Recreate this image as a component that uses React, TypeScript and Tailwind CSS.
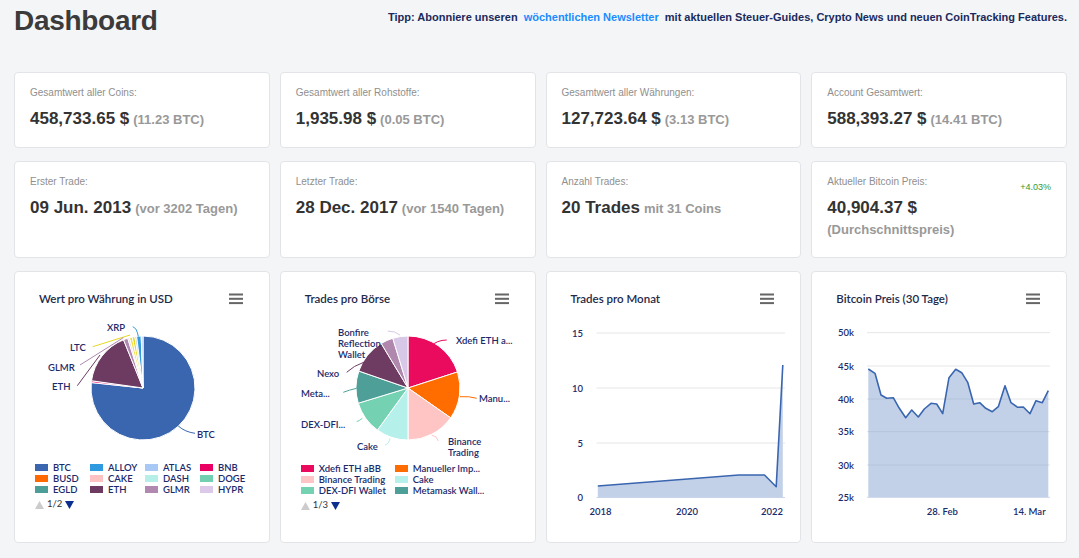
import React from "react";

const NAVY = "#1b2a6b";

type Slice = { from: number; to: number; color: string };

const pt = (cx: number, cy: number, r: number, a: number) => {
  const rad = (a * Math.PI) / 180;
  return [cx + r * Math.sin(rad), cy - r * Math.cos(rad)];
};

const arc = (cx: number, cy: number, r: number, a0: number, a1: number) => {
  const [x0, y0] = pt(cx, cy, r, a0);
  const [x1, y1] = pt(cx, cy, r, a1);
  const large = a1 - a0 > 180 ? 1 : 0;
  return `M${cx} ${cy} L${x0} ${y0} A${r} ${r} 0 ${large} 1 ${x1} ${y1} Z`;
};

const Pie = ({ cx, cy, r, slices }: { cx: number; cy: number; r: number; slices: Slice[] }) => (
  <g>
    {slices.map((s, i) => (
      <path key={i} d={arc(cx, cy, r, s.from, s.to)} fill={s.color} stroke="#fff" strokeWidth={1} strokeLinejoin="round" />
    ))}
  </g>
);

const Hamburger = () => (
  <svg width="14" height="12" viewBox="0 0 14 12">
    <rect x="0" y="0.5" width="14" height="2" fill="#666" />
    <rect x="0" y="4.8" width="14" height="2" fill="#666" />
    <rect x="0" y="9.1" width="14" height="2" fill="#666" />
  </svg>
);

const StatCard = ({ label, children, right }: { label: string; children: React.ReactNode; right?: React.ReactNode }) => (
  <div className="relative rounded-[4px] border border-[#e2e4e8] bg-white px-[15px] pt-[14px]">
    <div className="text-[10px] leading-[12px] text-[#8f8f8f]">{label}</div>
    <div className="mt-[10px]">{children}</div>
    {right}
  </div>
);

const Value = ({ main, sub }: { main: string; sub?: string }) => (
  <div className="leading-[20px] whitespace-nowrap">
    <span className="text-[17px] font-bold text-[#333]">{main}</span>
    {sub && <span className="ml-[4px] text-[13px] font-bold text-[#999]">{sub}</span>}
  </div>
);

const ChartCard = ({ title, children }: { title: string; children: React.ReactNode }) => (
  <div className="flex flex-col rounded-[4px] border border-[#e2e4e8] bg-white overflow-hidden" style={{ fontFamily: "Lato, 'Liberation Sans', sans-serif" }}>
    <div className="flex items-center justify-between pl-[24px] pr-[26px] pt-[20px] h-[34px]">
      <span className="text-[11.5px] leading-[14px] font-semibold text-[#1e2a4a]">{title}</span>
      <Hamburger />
    </div>
    {children}
  </div>
);

const Legend = ({ items, cols, colW, pl, page }: { items: [string, string][]; cols: number; colW: number; pl: number; page: string }) => (
  <div style={{ paddingLeft: pl }} className="pt-[5px]">
    <div className="grid" style={{ gridTemplateColumns: `repeat(${cols}, ${colW}px)` }}>
      {items.map(([c, n]) => (
        <div key={n} className="flex items-center h-[11px] whitespace-nowrap">
          <span className="w-[13px] h-[7px] shrink-0" style={{ background: c }} />
          <span className="ml-[5px] text-[9.5px] leading-[11px] font-semibold" style={{ color: NAVY }}>{n}</span>
        </div>
      ))}
    </div>
    <div className="flex items-center mt-[4px] h-[11px]">
      <svg width="9" height="8" viewBox="0 0 9 8"><path d="M4.5 0 L9 8 L0 8 Z" fill="#cccccc" /></svg>
      <span className="mx-[3px] text-[9.5px] text-[#333]">{page}</span>
      <svg width="9" height="8" viewBox="0 0 9 8"><path d="M0 0 L9 0 L4.5 8 Z" fill="#0c2f8f" /></svg>
    </div>
  </div>
);

const lbl = { fontSize: 9.5, fill: NAVY, fontWeight: 600 } as const;

const PieCoins = () => {
  const slices: Slice[] = [
    { from: 0, to: 276, color: "#3a66b0" },
    { from: 276, to: 278, color: "#ea0062" },
    { from: 278, to: 338, color: "#6d3b62" },
    { from: 338, to: 343, color: "#b088b0" },
    { from: 343, to: 345, color: "#dcc8e8" },
    { from: 345, to: 348, color: "#f0e040" },
    { from: 348, to: 351, color: "#e8d820" },
    { from: 351, to: 353, color: "#c8c8c8" },
    { from: 353, to: 358, color: "#2f9ae0" },
    { from: 358, to: 360, color: "#a8c8f5" },
  ];
  return (
    <svg width="254" height="151" viewBox="0 0 254 151" className="block shrink-0">
      <Pie cx={128} cy={82} r={52} slices={slices} />
      <g fill="none" strokeWidth={1}>
        <path d="M117.7 20.7 Q122 22 123.3 30.7" stroke="#2f9ae0" />
        <path d="M77.7 40.7 L115 29" stroke="#e8d820" />
        <path d="M65 59 L108.3 31.7" stroke="#b088b0" />
        <path d="M62.3 79.7 L85 49" stroke="#6d3b62" />
        <path d="M180 127.3 Q170 126 163.3 120" stroke="#3a66b0" />
      </g>
      <g style={lbl}>
        <text x="92" y="25">XRP</text>
        <text x="55" y="45">LTC</text>
        <text x="33" y="65">GLMR</text>
        <text x="37" y="84">ETH</text>
        <text x="182" y="132">BTC</text>
      </g>
    </svg>
  );
};

const PieExchanges = () => {
  const slices: Slice[] = [
    { from: 0, to: 72, color: "#ea0a5e" },
    { from: 72, to: 125, color: "#ff6d00" },
    { from: 125, to: 180, color: "#ffc4c4" },
    { from: 180, to: 216, color: "#b6f0ea" },
    { from: 216, to: 253, color: "#74d1b1" },
    { from: 253, to: 289, color: "#4f9f99" },
    { from: 289, to: 329, color: "#6e3c62" },
    { from: 329, to: 343, color: "#b088ae" },
    { from: 343, to: 360, color: "#d8c8e8" },
  ];
  return (
    <svg width="254" height="152" viewBox="0 0 254 152" className="block shrink-0">
      <Pie cx={127} cy={82} r={52} slices={slices} />
      <g fill="none" strokeWidth={1}>
        <path d="M149 40.7 Q156 34 165.7 34" stroke="#ea0a5e" />
        <path d="M179 90.7 Q188 90 195.7 92.3" stroke="#ff6d00" />
        <path d="M150.7 129 Q156 130 157.3 135" stroke="#ffc4c4" />
        <path d="M109 132.3 Q108 138 104 139" stroke="#b6f0ea" />
        <path d="M81.3 112.3 Q78 115 75.7 115.7" stroke="#74d1b1" />
        <path d="M75.7 82.3 Q68 84 62.3 86.3" stroke="#4f9f99" />
        <path d="M84 55.7 Q72 60 65.7 66.3" stroke="#6e3c62" />
        <path d="M119 29 Q114 25 106.7 25" stroke="#d8c8e8" />
      </g>
      <g style={lbl}>
        <text x="175" y="38">Xdefi ETH a...</text>
        <text x="198" y="96">Manu...</text>
        <text x="167" y="139">Binance</text>
        <text x="167" y="150">Trading</text>
        <text x="76" y="144">Cake</text>
        <text x="20" y="122">DEX-DFI...</text>
        <text x="20" y="91">Meta...</text>
        <text x="36" y="71">Nexo</text>
        <text x="57" y="30">Bonfire</text>
        <text x="57" y="41">Reflection</text>
        <text x="57" y="52">Wallet</text>
      </g>
    </svg>
  );
};

const TradesChart = () => {
  const pts = [
    [50.8, 180],
    [191.8, 169],
    [217.5, 169],
    [229.2, 180.7],
    [235.8, 59],
  ];
  const line = pts.map((p, i) => `${i ? "L" : "M"}${p[0]} ${p[1]}`).join(" ");
  const area = `${line} L235.8 191.5 L50.8 191.5 Z`;
  const grid = [
    ["15", 27],
    ["10", 82],
    ["5", 137],
    ["0", 191.5],
  ] as const;
  return (
    <svg width="254" height="230" viewBox="0 0 254 230" className="block shrink-0">
      {grid.map(([t, y]) => (
        <g key={t}>
          <line x1="49.5" x2="238" y1={y} y2={y} stroke={t === "0" ? "#ccd6eb" : "#e6e6e6"} strokeWidth={1} />
          <text x="36" y={y + 3.5} textAnchor="end" style={lbl}>{t}</text>
        </g>
      ))}
      <path d={area} fill="#c3d1e8" />
      <path d={line} fill="none" stroke="#3a66b0" strokeWidth={1.6} strokeLinejoin="round" />
      <g style={lbl}>
        <text x="53.5" y="209" textAnchor="middle">2018</text>
        <text x="140" y="209" textAnchor="middle">2020</text>
        <text x="225" y="209" textAnchor="middle">2022</text>
      </g>
    </svg>
  );
};

const raw = [
  [190, 312], [210, 325], [228, 390], [245, 400], [265, 398], [283, 430], [302, 458], [320, 435],
  [340, 456], [358, 432], [378, 415], [395, 417], [413, 446], [432, 338], [452, 313], [470, 323],
  [488, 352], [506, 417], [524, 413], [542, 430], [562, 440], [580, 425], [600, 362], [618, 413],
  [638, 427], [655, 426], [675, 446], [693, 407], [712, 413], [730, 377],
];

const BtcChart = () => {
  const pts = raw.map(([x, y]) => [x / 3 - 7, y / 3 - 41]);
  const line = pts.map((p, i) => `${i ? "L" : "M"}${p[0].toFixed(1)} ${p[1].toFixed(1)}`).join(" ");
  const last = pts[pts.length - 1];
  const area = `${line} L${last[0].toFixed(1)} 191.3 L${pts[0][0].toFixed(1)} 191.3 Z`;
  const grid = [
    ["50k", 26.7],
    ["45k", 60],
    ["40k", 93],
    ["35k", 125.7],
    ["30k", 159],
    ["25k", 191.3],
  ] as const;
  return (
    <svg width="254" height="230" viewBox="0 0 254 230" className="block shrink-0">
      <defs>
        <clipPath id="btc-area">
          <path d={area} />
        </clipPath>
      </defs>
      {grid.map(([t, y]) => (
        <g key={t}>
          <line x1="55" x2="238" y1={y} y2={y} stroke={t === "25k" ? "#ccd6eb" : "#e6e6e6"} strokeWidth={1} />
          <text x="42" y={y + 3.5} textAnchor="end" style={lbl}>{t}</text>
        </g>
      ))}
      <path d={area} fill="#c3d1e8" />
      <g clipPath="url(#btc-area)">
        {[60, 93, 125.7, 159].map((y) => (
          <line key={y} x1={pts[0][0]} x2={last[0]} y1={y} y2={y} stroke="#b4c3dd" strokeWidth={1} />
        ))}
      </g>
      <path d={line} fill="none" stroke="#3a66b0" strokeWidth={1.6} strokeLinejoin="round" />
      <g style={lbl}>
        <text x="130.3" y="209" textAnchor="middle">28. Feb</text>
        <text x="217.3" y="209" textAnchor="middle">14. Mar</text>
      </g>
    </svg>
  );
};

export default function App() {
  return (
    <div className="min-h-screen bg-[#f4f5f7] pl-[14px] pr-[12px]" style={{ fontFamily: "'Liberation Sans', Arial, sans-serif" }}>
      <div className="flex items-start justify-between h-[72px]">
        <h1 className="pt-[4px] text-[28px] leading-[34px] font-bold tracking-[-0.3px] text-[#3b3b3b]">Dashboard</h1>
        <p className="pt-[11px] text-[11px] leading-[13px] font-bold text-[#1a2a5c] whitespace-nowrap">
          Tipp: Abonniere unseren <span className="ml-[3px] mr-[3px] text-[#1a8cff]">wöchentlichen Newsletter</span> mit aktuellen Steuer-Guides, Crypto News und neuen CoinTracking Features.
        </p>
      </div>
      <div className="grid grid-cols-4 gap-x-[10px] gap-y-[13px] grid-rows-[76px_97px_272px]">
        <StatCard label="Gesamtwert aller Coins:"><Value main="458,733.65 $" sub="(11.23 BTC)" /></StatCard>
        <StatCard label="Gesamtwert aller Rohstoffe:"><Value main="1,935.98 $" sub="(0.05 BTC)" /></StatCard>
        <StatCard label="Gesamtwert aller Währungen:"><Value main="127,723.64 $" sub="(3.13 BTC)" /></StatCard>
        <StatCard label="Account Gesamtwert:"><Value main="588,393.27 $" sub="(14.41 BTC)" /></StatCard>

        <StatCard label="Erster Trade:"><Value main="09 Jun. 2013" sub="(vor 3202 Tagen)" /></StatCard>
        <StatCard label="Letzter Trade:"><Value main="28 Dec. 2017" sub="(vor 1540 Tagen)" /></StatCard>
        <StatCard label="Anzahl Trades:"><Value main="20 Trades" sub="mit 31 Coins" /></StatCard>
        <StatCard
          label="Aktueller Bitcoin Preis:"
          right={<span className="absolute right-[15px] top-[19px] text-[9px] text-[#2e9b3a]">+4.03%</span>}
        >
          <Value main="40,904.37 $" />
          <div className="mt-[2px] text-[13px] leading-[20px] font-bold text-[#999]">(Durchschnittspreis)</div>
        </StatCard>

        <ChartCard title="Wert pro Währung in USD">
          <PieCoins />
          <Legend
            cols={4}
            colW={55}
            pl={20}
            page="1/2"
            items={[
              ["#3a66b0", "BTC"], ["#2f9ae0", "ALLOY"], ["#a8c8f5", "ATLAS"], ["#ea0062", "BNB"],
              ["#ff6a00", "BUSD"], ["#ffc2c2", "CAKE"], ["#b6efe8", "DASH"], ["#72d0b0", "DOGE"],
              ["#4d9e99", "EGLD"], ["#6d3b62", "ETH"], ["#b088b0", "GLMR"], ["#dcc8e8", "HYPR"],
            ]}
          />
        </ChartCard>
        <ChartCard title="Trades pro Börse">
          <PieExchanges />
          <Legend
            cols={2}
            colW={94}
            pl={20}
            page="1/3"
            items={[
              ["#ea0a5e", "Xdefi ETH aBB"], ["#ff6d00", "Manueller Imp..."],
              ["#ffc4c4", "Binance Trading"], ["#b6f0ea", "Cake"],
              ["#74d1b1", "DEX-DFI Wallet"], ["#4f9f99", "Metamask Wall..."],
            ]}
          />
        </ChartCard>
        <ChartCard title="Trades pro Monat">
          <TradesChart />
        </ChartCard>
        <ChartCard title="Bitcoin Preis (30 Tage)">
          <BtcChart />
        </ChartCard>
      </div>
    </div>
  );
}
